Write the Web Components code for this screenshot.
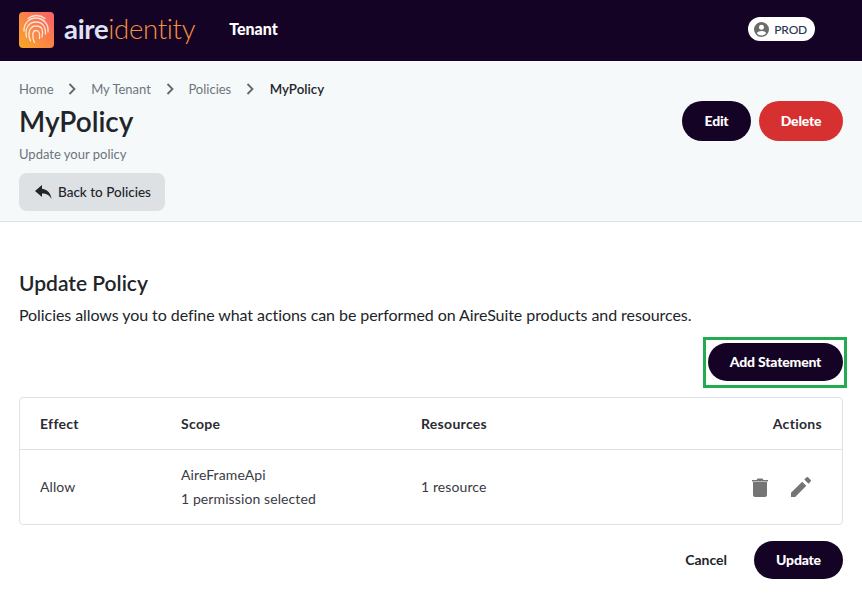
<!DOCTYPE html>
<html>
<head>
<meta charset="utf-8">
<title>MyPolicy</title>
<style>
  html, body { margin: 0; padding: 0; background: white; }
  body { font-family: Lato, sans-serif; color: #212529; }
</style>
</head>
<body>
<app-header></app-header>
<page-banner></page-banner>
<policy-form></policy-form>

<script>
(function () {
  function define (name, html) {
    let template = document.createElement('template')
    template.innerHTML = html
    customElements.define(name, class extends HTMLElement {
      constructor () {
        super()
        this.attachShadow({ mode: 'open' })
          .appendChild(template.content.cloneNode(true))
      }
    })
  }

  define('pill-button', `
    <style>
      :host {
        display: inline-flex;
        align-items: center;
        justify-content: center;
        box-sizing: border-box;
        height: 40px;
        padding: 0 22px;
        border-radius: 20px;
        background: #150326;
        color: white;
        font: 900 14px/20px Lato, sans-serif;
        letter-spacing: -0.2px;
      }
      :host([danger]) { background: #d63031; }
      :host([plain]) { background: transparent; color: #212529; padding: 0; font-weight: 700; letter-spacing: 0; }
    </style>
    <slot></slot>
  `)

  define('app-header', `
    <style>
      :host {
        display: flex;
        align-items: center;
        box-sizing: border-box;
        height: 61px;
        padding: 0 47px 0 19px;
        background: #150326;
        color: white;
      }
      .mark { width: 35px; height: 36px; display: block; margin: 0 10px 2px 0; }
      .logo { font: 400 27.5px/36px Lato, sans-serif; margin: 0 34px 3px 0; letter-spacing: -0.3px; }
      .logo b { font-weight: 700; color: #dfe1f5; }
      .logo span { font-weight: 300; color: #f7913f; }
      .tenant { font-weight: 900; font-size: 16px; flex: 1; margin-bottom: 4px; }
      .env {
        display: flex;
        align-items: center;
        gap: 5px;
        height: 24px;
        padding: 0 8px 0 6px;
        border-radius: 12px;
        background: white;
        color: #2b3350;
        font-size: 12px;
        font-weight: 500;
        letter-spacing: -0.2px;
        margin-bottom: 3px;
      }
    </style>
    <svg class="mark" viewBox="0 0 35 36">
      <defs>
        <linearGradient id="g" x1="0" y1="1" x2="1" y2="0">
          <stop offset="0" stop-color="#f7a823"/>
          <stop offset="1" stop-color="#fb5f6c"/>
        </linearGradient>
      </defs>
      <rect width="35" height="36" rx="4" fill="url(#g)"/>
      <g fill="none" stroke="#fde4d8" stroke-width="1.300" stroke-linecap="round">
        <path d="M9 6.500c5-4 12-4 17 0"/>
        <path d="M5 19c-.5-7 5-13 12-13s13 6 12 14"/>
        <path d="M7.500 25c-2-8 2-15 9.500-15s10 6 9.500 12"/>
        <path d="M11.500 29c-3-6-2-15 5.500-15s7 6 6 11"/>
        <path d="M15.500 30.500c-2-4-3-12 1.500-12s3.500 5 3.500 8"/>
      </g>
    </svg>
    <div class="logo"><b>aire</b><span>identity</span></div>
    <div class="tenant">Tenant</div>
    <div class="env">
      <svg width="15" height="15" viewBox="0 0 24 24"><path fill="#6b6b6b" d="M12 0a12 12 0 1 0 0 24 12 12 0 0 0 0-24zm0 4.500a4 4 0 1 1 0 8 4 4 0 0 1 0-8zm0 17a9.500 9.500 0 0 1-7.500-3.700c.9-2.300 4.700-3.400 7.500-3.400s6.600 1.100 7.500 3.400A9.500 9.500 0 0 1 12 21.500z"/></svg>
      PROD
    </div>
  `)

  define('bread-crumbs', `
    <style>
      :host {
        display: flex;
        align-items: center;
        height: 20px;
        color: #6c757d;
        font-size: 13px;
      }
      svg { margin: 0 14.75px; }
      b { color: #212529; font-weight: 600; font-size: 13.300px; margin-left: 1px; }
    </style>
    <span>Home</span>
    <svg width="8" height="12" viewBox="0 0 8 12"><path d="M1.500 1l5 5-5 5" fill="none" stroke="#666" stroke-width="1.800"/></svg>
    <span>My Tenant</span>
    <svg width="8" height="12" viewBox="0 0 8 12"><path d="M1.500 1l5 5-5 5" fill="none" stroke="#666" stroke-width="1.800"/></svg>
    <span>Policies</span>
    <svg width="8" height="12" viewBox="0 0 8 12"><path d="M1.500 1l5 5-5 5" fill="none" stroke="#666" stroke-width="1.800"/></svg>
    <b>MyPolicy</b>
  `)

  define('page-banner', `
    <style>
      :host {
        display: flex;
        justify-content: space-between;
        box-sizing: border-box;
        height: 161px;
        padding: 18px 19px 0;
        background: #f6f9fa;
        border-bottom: 1px solid #dee2e6;
      }
      h1 { margin: 2px 0 0; font-size: 28px; line-height: 40px; font-weight: 600; color: #212529; }
      p { margin: 3px 0 0; font-size: 13px; line-height: 20px; color: #6c757d; }
      .back {
        display: flex;
        width: 146px;
        align-items: center;
        gap: 6px;
        box-sizing: border-box;
        height: 38px;
        margin-top: 9px;
        padding: 0 0 0 16px;
        border-radius: 8px;
        background: #dee1e4;
        font-size: 13.500px;
        font-weight: 500;
        color: #212529;
      }
      .actions { display: flex; gap: 8px; margin-top: 22px; }
      pill-button:first-child { width: 69px; padding: 0; }
      pill-button:last-child { width: 84px; padding: 0; }
    </style>
    <div>
      <bread-crumbs></bread-crumbs>
      <h1>MyPolicy</h1>
      <p>Update your policy</p>
      <div class="back">
        <svg width="17" height="15" viewBox="0 0 17 15"><path fill="#212529" d="M7 0L0 6l7 6V8.400c4.500 0 7.500 1.600 9.500 5.600C16 9 13 4.500 7 3.700z"/></svg>
        Back to Policies
      </div>
    </div>
    <div class="actions">
      <pill-button>Edit</pill-button>
      <pill-button danger>Delete</pill-button>
    </div>
  `)

  define('policy-table', `
    <style>
      :host {
        display: block;
        border: 1px solid #dee2e6;
        border-radius: 4px;
        font-size: 14px;
        line-height: 24px;
      }
      .row {
        display: grid;
        grid-template-columns: 141px 240px 1fr 120px;
        align-items: center;
        padding: 0 20px;
      }
      .head { height: 51px; border-bottom: 1px solid #dee2e6; font-weight: 700; color: #2b2b33; letter-spacing: 0.3px; }
      .body { height: 74px; color: #3a3a44; letter-spacing: 0.1px; }
      .right { text-align: right; }
      .icons { display: flex; justify-content: flex-end; align-items: center; gap: 23px; padding-right: 11px; }
    </style>
    <div class="row head">
      <div>Effect</div>
      <div>Scope</div>
      <div>Resources</div>
      <div class="right">Actions</div>
    </div>
    <div class="row body">
      <div>Allow</div>
      <div>
        <div>AireFrameApi</div>
        <div>1 permission selected</div>
      </div>
      <div>1 resource</div>
      <div class="icons">
        <svg width="16" height="20" viewBox="0 0 16 20"><path fill="#757575" d="M1 18c0 1.100.9 2 2 2h10c1.100 0 2-.9 2-2V5H1zM16 3h-4.500l-1-1.500h-5L4.500 3H0v1.500h16z"/></svg>
        <svg width="20" height="20" viewBox="3 3 18 18"><path fill="#757575" d="M3 17.250V21h3.750L16.800 10.950l-3.750-3.750zM20.710 7.040a1 1 0 0 0 0-1.410l-2.340-2.340a1 1 0 0 0-1.410 0l-2 2 3.750 3.750z"/></svg>
      </div>
    </div>
  `)

  define('policy-form', `
    <style>
      :host { display: block; padding: 48px 19px 0; }
      h2 { margin: 0; font-size: 21px; line-height: 26px; font-weight: 600; color: #212529; }
      p { margin: 7px 0 0; font-size: 16px; line-height: 24px; color: #212529; letter-spacing: -0.07px; }
      .add { display: flex; justify-content: flex-end; margin: 10px -4px 0 0; }
      .mark { display: flex; border: 3px solid #22ab4f; padding: 3px 1px 4px 2px; }
      .mark pill-button { width: 135px; padding: 0; height: 38px; border-radius: 19px; }
      policy-table { margin-top: 9px; }
      .foot { display: flex; justify-content: flex-end; align-items: center; gap: 27px; margin-top: 15px; }
      .foot pill-button:last-child { width: 89px; padding: 0; height: 38px; border-radius: 19px; }
    </style>
    <h2>Update Policy</h2>
    <p>Policies allows you to define what actions can be performed on AireSuite products and resources.</p>
    <div class="add"><div class="mark"><pill-button>Add Statement</pill-button></div></div>
    <policy-table></policy-table>
    <div class="foot">
      <pill-button plain>Cancel</pill-button>
      <pill-button>Update</pill-button>
    </div>
  `)
})()
</script>
</body>
</html>
